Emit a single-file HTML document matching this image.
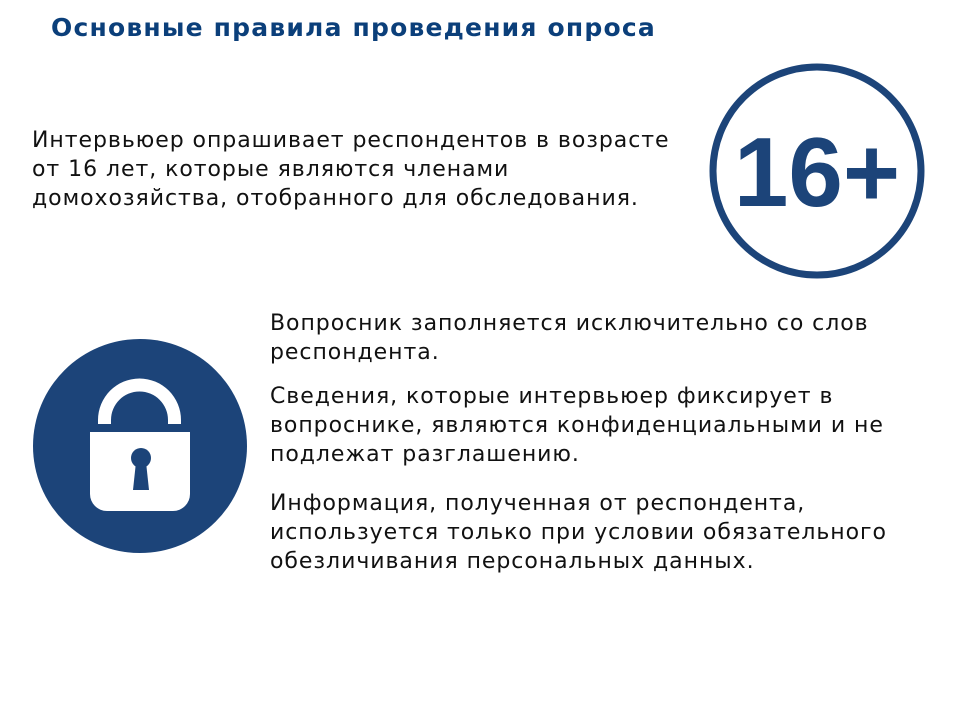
<!DOCTYPE html>
<html><head><meta charset="utf-8"><style>
body{margin:0;width:960px;height:720px;background:#fff;position:relative;overflow:hidden;font-family:"DejaVu Sans","Liberation Sans",sans-serif;color:#111}
.t{position:absolute;white-space:nowrap;font-size:22px;line-height:29px;letter-spacing:0.95px}
h1{position:absolute;left:51px;top:13px;margin:0;font-size:25px;font-weight:bold;color:#0b3f7a;white-space:nowrap;letter-spacing:1.2px}
</style></head><body>
<h1>Основные правила проведения опроса</h1>
<div class="t" style="left:32px;top:126px">Интервьюер опрашивает респондентов в возрасте<br>от 16 лет, которые являются членами<br>домохозяйства, отобранного для обследования.</div>
<svg style="position:absolute;left:0;top:0" width="960" height="720">
<circle cx="817" cy="171" r="104" fill="none" stroke="#1c4479" stroke-width="7"/>
<text x="817" y="206" text-anchor="middle" font-family="Liberation Sans,sans-serif" font-weight="bold" font-size="98" fill="#1c4479">16+</text>
<circle cx="140" cy="446" r="107" fill="#1c4479"/>
<path d="M98 424 V420 A41.5 41.5 0 0 1 181 420 V424 H168 V420 A28.5 28.5 0 0 0 111 420 V424 Z" fill="#fff"/>
<path d="M90 432 H190 V494 A17 17 0 0 1 173 511 H107 A17 17 0 0 1 90 494 Z" fill="#fff"/>
<circle cx="141" cy="458" r="10" fill="#1c4479"/>
<path d="M136 462 H146 L149 490 H133 Z" fill="#1c4479"/>
</svg>
<div class="t" style="left:270px;top:309px">Вопросник заполняется исключительно со слов<br>респондента.</div>
<div class="t" style="left:270px;top:382px">Сведения, которые интервьюер фиксирует в<br>вопроснике, являются конфиденциальными и не<br>подлежат разглашению.</div>
<div class="t" style="left:270px;top:489px">Информация, полученная от респондента,<br>используется только при условии обязательного<br>обезличивания персональных данных.</div>
</body></html>
